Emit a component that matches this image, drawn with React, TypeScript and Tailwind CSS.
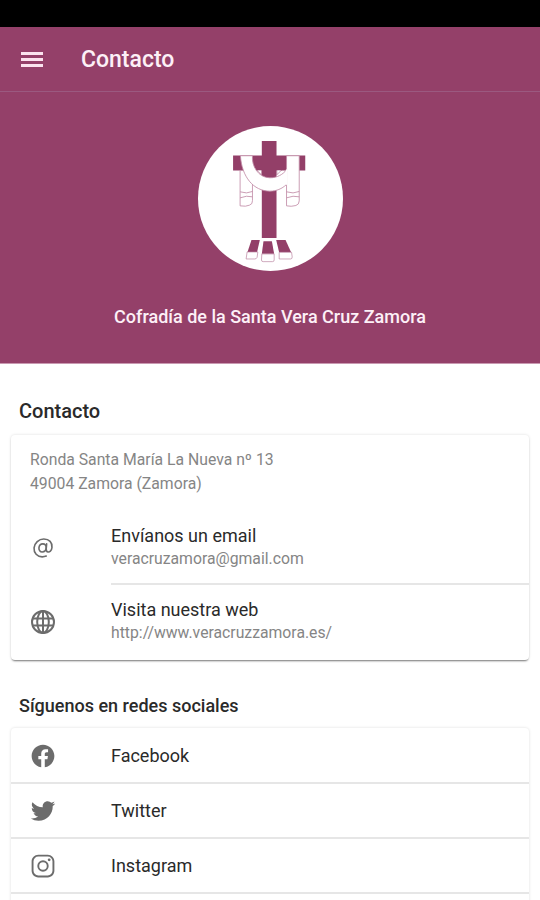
import React from 'react';
import { IoAt, IoLogoFacebook, IoLogoInstagram, IoLogoTwitter } from 'react-icons/io5';

const CrossLogo: React.FC = () => (
  <svg viewBox="24 33 434 434" className="w-[145px] h-[145px]" aria-hidden="true">
    <circle cx="241" cy="250" r="217" fill="#fff" />
    <path fill="#933f68" d="M215 78h44v43h86v45h-86v202h-44V166h-86v-45h86z" />
    {/* shroud */}
    <g fill="#fff" stroke="#c08aa6" strokeWidth="2.5">
      <path d="M150 166v106q18 3 28-2q10-3 9-14V166z" />
      <path d="M150 230q20 7 37-1M150 248q20-8 37-3" fill="none" />
      <path d="M289 122v150q14 3 28-1q10-3 10-14V122z" />
      <path d="M289 230q20 7 38-1M289 248q20-8 38-3" fill="none" />
      <path d="M151 122h36c-3 30 17 66 52 66c22 0 38-9 50-24v44c-14 13-30 20-50 20c-49 0-84-43-88-106z" />
    </g>
    <path d="M289 163v46" stroke="#fff" strokeWidth="4" />
    <path d="M200 165h14v14zM260 179l14-14h-14z" fill="#fff" stroke="#933f68" strokeWidth="1.5" />
    {/* base stones */}
    <g fill="#933f68">
      <path d="M184 374h25l-9 40h-29z" />
      <path d="M220 378h25l7 37h-37z" />
      <path d="M258 374h28l17 38h-36z" />
    </g>
    <g fill="#fff" stroke="#b9809d" strokeWidth="2">
      <path d="M171 410h32l-2 16q-2 5-7 5h-26z" />
      <path d="M215 416h37v18q0 5-5 5h-28q-5 0-5-5z" />
      <path d="M267 411h37l2 14q0 6-5 6h-34z" />
    </g>
  </svg>
);

const Globe: React.FC<{ className?: string }> = ({ className }) => (
  <svg viewBox="0 0 26 26" className={className} fill="none" stroke="currentColor" strokeWidth="2" aria-hidden="true">
    <circle cx="13" cy="13" r="11" />
    <ellipse cx="13" cy="13" rx="5.8" ry="11" />
    <path d="M13 2v22M2.6 9.5h20.8M2.6 16.5h20.8" />
  </svg>
);

const links = [
  { title: 'Envíanos un email', detail: 'veracruzamora@gmail.com', Icon: IoAt },
  { title: 'Visita nuestra web', detail: 'http://www.veracruzzamora.es/', Icon: Globe },
];

const socials = [
  { name: 'Facebook', Icon: IoLogoFacebook },
  { name: 'Twitter', Icon: IoLogoTwitter },
  { name: 'Instagram', Icon: IoLogoInstagram },
];

export default function App() {
  return (
    <div className="h-[900px] w-[540px] overflow-hidden bg-white font-['Roboto',sans-serif] text-[#2a2a2a]">
      <div className="h-[27px] bg-black" />
      <header className="flex h-[65px] items-center border-b border-[#9b5980] bg-[#944069] pl-[21px] text-[#fdf0f7]">
        <div className="flex w-[22px] flex-col gap-[3px]">
          <div className="h-[3px] bg-[#fbe3ef]" />
          <div className="h-[3px] bg-[#fbe3ef]" />
          <div className="h-[3px] bg-[#fbe3ef]" />
        </div>
        <h1 className="ml-[38px] pt-[2px] text-[23px] font-medium">Contacto</h1>
      </header>

      <section className="flex h-[272px] flex-col items-center border-b border-[#c999b1] bg-[#944069] pt-[34px]">
        <CrossLogo />
        <p className="mt-[34px] text-[18px] leading-6 font-medium text-[#fdf0f7]">Cofradía de la Santa Vera Cruz Zamora</p>
      </section>

      <h2 className="mt-[34px] ml-[19px] text-[20px] leading-[26px] font-medium">Contacto</h2>
      <div className="mx-[11px] mt-[11px] h-[225px] rounded bg-white shadow-[0_0_3px_rgba(0,0,0,0.14),0_2px_2px_-1px_rgba(0,0,0,0.5)]">
        <p className="h-[76px] pt-[13px] pl-[19px] text-[15.75px] leading-6 text-[#858585]">
          Ronda Santa María La Nueva nº 13<br />49004 Zamora (Zamora)
        </p>
        {links.map(({ title, detail, Icon }, i) => (
          <div key={title} className="flex h-[74px] pl-[19px]">
            <Icon className="mt-[24px] size-[26px] text-[#6c6c6c]" />
            <div className={i === 0 ? 'ml-[55px] flex-1 border-b-2 border-[#e6e6e6] pt-[13px]' : 'ml-[55px] flex-1 pt-[13px]'}>
              <div className="text-[18px] leading-[23px]">{title}</div>
              <div className="text-[15.75px] leading-6 text-[#858585]">{detail}</div>
            </div>
          </div>
        ))}
      </div>

      <h2 className="mt-[33px] ml-[19px] text-[18px] leading-[26px] font-medium">Síguenos en redes sociales</h2>
      <div className="mx-[11px] mt-[9px] h-[230px] rounded bg-white pt-px shadow-[0_0_3px_rgba(0,0,0,0.14)]">
        {socials.map(({ name, Icon }) => (
          <div key={name} className="flex h-[55px] items-center border-b-2 border-[#e6e6e6] pl-[19px]">
            <Icon className="size-[26px] text-[#6c6c6c]" />
            <span className="ml-[55px] text-[18px]">{name}</span>
          </div>
        ))}
      </div>
    </div>
  );
}
